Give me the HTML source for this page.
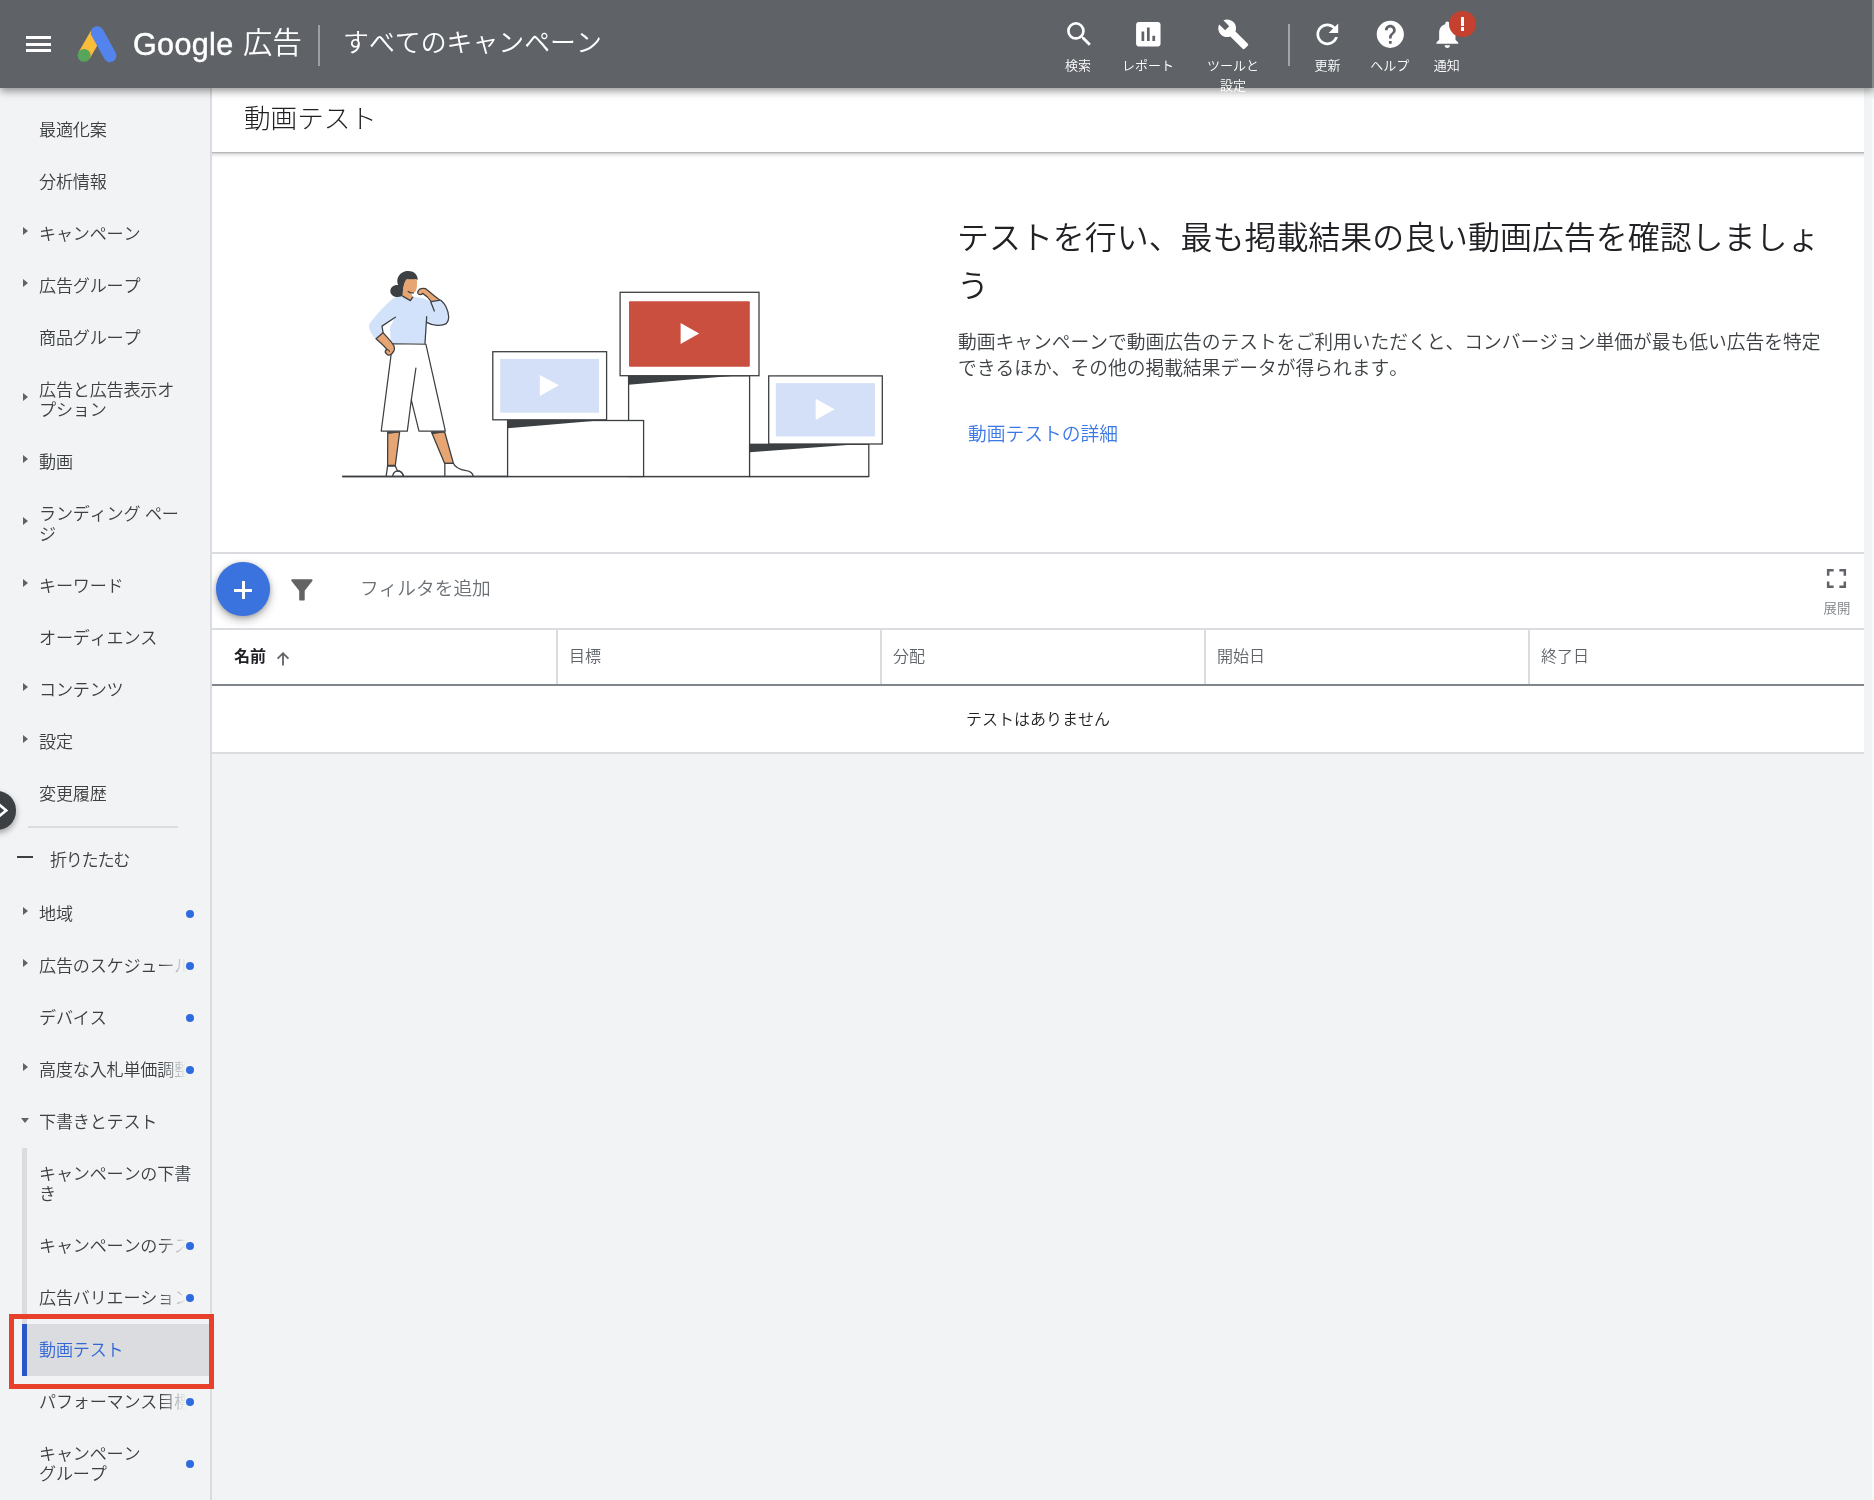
<!DOCTYPE html>
<html lang="ja">
<head>
<meta charset="utf-8">
<title>動画テスト - Google 広告</title>
<style>
*{box-sizing:border-box;margin:0;padding:0}
html,body{width:1874px;height:1500px;overflow:hidden;background:#f1f3f4}
body{font-kerning:none;font-family:"Liberation Sans","Noto Sans CJK JP",sans-serif;color:#3c4043;position:relative}
.abs{position:absolute}
#hdr,#side,#titlebar,#hero,#tool,#thead,#trow{will-change:transform}
/* header */
#hdr{position:absolute;left:0;top:0;width:1874px;height:88px;background:#5f6368;box-shadow:0 3px 8px rgba(0,0,0,.42);z-index:20;color:#fff}
#hdr .bar{position:absolute;left:26px;width:25px;height:3px;background:#fff}
#gtxt{position:absolute;left:133px;top:24px;font-size:30.5px;line-height:40px;letter-spacing:.35px;color:#fff;-webkit-text-stroke:.45px #fff}
#gads{position:absolute;left:243px;top:22.5px;font-size:29.4px;line-height:40px;font-weight:350;color:#fff}
#hdiv{position:absolute;left:318px;top:25px;width:2px;height:41px;background:#9aa0a6}
#acct{position:absolute;left:343px;top:23px;font-size:25.9px;line-height:40px;font-weight:350;color:#fff;white-space:nowrap}
.hlabel{position:absolute;top:56px;font-size:13px;font-weight:350;line-height:20px;color:#fff;text-align:center;white-space:nowrap;transform:translateX(-50%)}
/* sidebar */
#side{position:absolute;left:0;top:88px;width:212px;height:1412px;background:#f1f3f4;border-right:2px solid #d9dce0;z-index:5}
.ni{position:absolute;left:39px;letter-spacing:-.2px;font-size:17.1px;margin-top:1.5px;line-height:20px;color:#3c4043;white-space:nowrap;font-weight:350}
.tri{position:absolute;left:23px;width:0;height:0;border-left:5px solid #5f6368;border-top:4.5px solid transparent;border-bottom:4.5px solid transparent}
.trid{position:absolute;left:21px;width:0;height:0;border-top:5px solid #5f6368;border-left:4.5px solid transparent;border-right:4.5px solid transparent}
.dot{position:absolute;left:186px;width:8px;height:8px;border-radius:50%;background:#2f6be0}
.fade{position:absolute;left:160px;width:26px;height:30px;background:linear-gradient(to right,rgba(241,243,244,0),#f1f3f4)}
/* main */
#titlebar{position:absolute;left:212px;top:88px;width:1652px;height:64px;background:#fff;z-index:4}
#titlebar::after{content:"";position:absolute;left:0;right:0;top:100%;height:6px;background:linear-gradient(rgba(0,0,0,.34),rgba(0,0,0,.12) 30%,rgba(0,0,0,.03) 70%,rgba(0,0,0,0))}
#titlebar span{position:absolute;left:32px;top:11px;font-size:26.6px;line-height:40px;font-weight:300;color:#202124}
#hero{position:absolute;left:212px;top:152px;width:1652px;height:400px;background:#fff;z-index:3}
#h1{position:absolute;left:745px;top:62.300px;width:875px;font-size:31.950px;line-height:48px;font-weight:350;color:#202124;letter-spacing:0}
#desc{position:absolute;left:746px;top:177.5px;width:875px;font-size:18.75px;line-height:26.4px;font-weight:350;color:#3c4043}
#lnk{position:absolute;left:756px;top:269.5px;font-size:18.75px;line-height:26px;font-weight:350;color:#3b78e7}
#tool{position:absolute;left:212px;top:552px;width:1652px;height:78px;background:#fff;border-top:2px solid #dadce0;border-bottom:2px solid #dadce0;z-index:3}
#fab{position:absolute;left:4.2px;top:8.2px;width:53.6px;height:53.6px;border-radius:50%;background:#3a72de;box-shadow:0 4px 10px rgba(0,0,0,.28),0 1px 4px rgba(0,0,0,.2)}
#thead{position:absolute;left:212px;top:630px;width:1652px;height:56px;background:#fff;border-bottom:2px solid #80868b;z-index:3}
.th{position:absolute;top:0;height:54px;border-left:2px solid #dadce0;font-size:16px;line-height:20px;color:#5f6368;padding:17px 0 0 11px;font-weight:350}
#trow{position:absolute;left:212px;top:686px;width:1652px;height:68px;background:#fff;border-bottom:2px solid #dadce0;z-index:3;text-align:center;font-size:16px;line-height:20px;padding-top:24px;color:#202124;font-weight:350}
</style>
</head>
<body>
<div id="hdr">
  <div class="bar" style="top:36px"></div><div class="bar" style="top:42.5px"></div><div class="bar" style="top:49px"></div>
  <svg class="abs" style="left:70px;top:20px" width="54" height="48" viewBox="70 20 54 48">
    <line x1="84.1" y1="55.4" x2="96.6" y2="33.8" stroke="#f9bd3a" stroke-width="12.9"/>
    <line x1="97.25" y1="32.7" x2="110" y2="55.7" stroke="#5384ee" stroke-width="12.9" stroke-linecap="round"/>
    <circle cx="84.1" cy="55.4" r="6.45" fill="#57a55a"/>
  </svg>
  <svg class="abs" style="left:1062.5px;top:17.8px" width="32.64" height="32.64" viewBox="0 0 24 24"><path fill="#fff" d="M15.5 14h-.79l-.28-.27A6.471 6.471 0 0 0 16 9.5 6.5 6.5 0 1 0 9.5 16c1.61 0 3.09-.59 4.23-1.57l.27.28v.79l5 4.99L20.49 19l-4.99-5zm-6 0C7.01 14 5 11.99 5 9.5S7.01 5 9.5 5 14 7.01 14 9.5 11.99 14 9.5 14z"/></svg>
  <svg class="abs" style="left:1131.9px;top:17.6px" width="32.64" height="32.64" viewBox="0 0 24 24"><path fill="#fff" d="M19 3H5c-1.1 0-2 .9-2 2v14c0 1.1.9 2 2 2h14c1.1 0 2-.9 2-2V5c0-1.1-.9-2-2-2zM9 17H7v-7h2v7zm4 0h-2V7h2v10zm4 0h-2v-4h2v4z"/></svg>
  <svg class="abs" style="left:1217.1px;top:17.6px" width="32.64" height="32.64" viewBox="0 0 24 24"><path fill="#fff" d="M22.7 19l-9.1-9.1c.9-2.3.4-5-1.5-6.9-2-2-5-2.4-7.4-1.3L9 6 6 9 1.6 4.7C.4 7.1.9 10.1 2.9 12.1c1.9 1.9 4.6 2.4 6.9 1.5l9.1 9.1c.4.4 1 .4 1.4 0l2.3-2.3c.5-.4.5-1.1.1-1.4z"/></svg>
  <svg class="abs" style="left:1311.3px;top:17.8px" width="32.64" height="32.64" viewBox="0 0 24 24"><path fill="#fff" d="M17.65 6.35C16.2 4.9 14.21 4 12 4c-4.42 0-7.99 3.58-7.99 8s3.57 8 7.99 8c3.73 0 6.84-2.55 7.73-6h-2.08c-.82 2.33-3.04 4-5.65 4-3.31 0-6-2.69-6-6s2.69-6 6-6c1.66 0 3.14.69 4.22 1.78L13 11h7V4l-2.35 2.35z"/></svg>
  <svg class="abs" style="left:1373.7px;top:17.7px" width="32.64" height="32.64" viewBox="0 0 24 24"><path fill="#fff" d="M12 2C6.48 2 2 6.48 2 12s4.48 10 10 10 10-4.48 10-10S17.52 2 12 2zm1 17h-2v-2h2v2zm2.07-7.75l-.9.92C13.45 12.9 13 13.5 13 15h-2v-.5c0-1.1.45-2.1 1.17-2.83l1.24-1.26c.37-.36.59-.86.59-1.41 0-1.1-.9-2-2-2s-2 .9-2 2H8c0-2.21 1.79-4 4-4s4 1.79 4 4c0 .88-.36 1.68-.93 2.25z"/></svg>
  <svg class="abs" style="left:1430.5px;top:17.9px" width="32.64" height="32.64" viewBox="0 0 24 24"><path fill="#fff" d="M12 22c1.1 0 2-.9 2-2h-4c0 1.1.89 2 2 2zm6-6v-5c0-3.07-1.64-5.64-4.5-6.32V4c0-.83-.67-1.5-1.5-1.5s-1.5.67-1.5 1.5v.68C7.63 5.36 6 7.92 6 11v5l-2 2v1h16v-1l-2-2z"/></svg>
  <div class="abs" style="left:1449.3px;top:11px;width:26.3px;height:26.3px;border-radius:50%;background:#c5412f"></div>
  <div class="abs" style="left:1460.600px;top:17.400px;width:3.500px;height:8.700px;background:#fff"></div>
  <div class="abs" style="left:1460.600px;top:27.400px;width:3.500px;height:3.500px;background:#fff"></div>
  <div class="abs" style="left:1288px;top:24px;width:2px;height:42px;background:#a1a5aa"></div>
  <div id="gtxt">Google</div>
  <div id="gads">広告</div>
  <div id="hdiv"></div>
  <div id="acct">すべてのキャンペーン</div>
  <div class="hlabel" style="left:1078px">検索</div>
  <div class="hlabel" style="left:1148px">レポート</div>
  <div class="hlabel" style="left:1233px">ツールと<br>設定</div>
  <div class="hlabel" style="left:1327.500px">更新</div>
  <div class="hlabel" style="left:1389.800px">ヘルプ</div>
  <div class="hlabel" style="left:1446.800px">通知</div>
</div>
<div class="abs" style="left:1872px;top:0;width:2px;height:88px;background:#85898e;z-index:30"></div>
<div class="abs" style="left:1872px;top:98px;width:2px;height:1402px;background:#f8f9fa;z-index:2"></div>
<div id="side">
<div class="abs" style="left:28px;top:738px;width:150px;height:2px;background:#dadce0"></div>
<div class="abs" style="left:17.2px;top:767.6px;width:15.6px;height:2.2px;background:#3c4043"></div>
<div class="ni" style="left:50px;top:761px;letter-spacing:-1.3px">折りたたむ</div>
<div class="abs" style="left:22px;top:1060px;width:5px;height:176px;background:#dadce0"></div>
<div class="abs" style="left:22px;top:1236px;width:188px;height:52px;background:#dadce0;border-left:5px solid #2a56c6"></div>
<div class="abs" style="left:9px;top:1226px;width:205px;height:75px;border:5px solid #e8402a;z-index:9"></div>
<div class="abs" style="left:-22.4px;top:703.2px;width:38.4px;height:38.4px;border-radius:50%;background:#3c4043;box-shadow:0 3px 6px rgba(0,0,0,.35);z-index:8"></div>
<svg class="abs" style="left:0;top:710px;z-index:9" width="12" height="25" viewBox="0 0 12 25"><path d="M-3.500 4.400L6.200 12.400L-3.500 20.400" fill="none" stroke="#fff" stroke-width="2.6"/></svg>
<div class="ni" style="top:31px">最適化案</div>
<div class="ni" style="top:83px">分析情報</div>
<div class="ni" style="top:135px">キャンペーン</div>
<div class="tri" style="top:139px"></div>
<div class="ni" style="top:187px">広告グループ</div>
<div class="tri" style="top:191px"></div>
<div class="ni" style="top:239px">商品グループ</div>
<div class="ni" style="top:291px">広告と広告表示オ<br>プション</div>
<div class="tri" style="top:305px"></div>
<div class="ni" style="top:363px">動画</div>
<div class="tri" style="top:367px"></div>
<div class="ni" style="top:415px">ランディング ペー<br>ジ</div>
<div class="tri" style="top:429px"></div>
<div class="ni" style="top:487px">キーワード</div>
<div class="tri" style="top:491px"></div>
<div class="ni" style="top:539px">オーディエンス</div>
<div class="ni" style="top:591px">コンテンツ</div>
<div class="tri" style="top:595px"></div>
<div class="ni" style="top:643px">設定</div>
<div class="tri" style="top:647px"></div>
<div class="ni" style="top:695px">変更履歴</div>
<div class="ni" style="top:815px">地域</div>
<div class="tri" style="top:819px"></div>
<div class="dot" style="top:822px"></div>
<div class="ni" style="top:867px;width:147px;overflow:hidden">広告のスケジュール</div>
<div class="tri" style="top:871px"></div>
<div class="fade" style="top:862px"></div>
<div class="dot" style="top:874px"></div>
<div class="ni" style="top:919px">デバイス</div>
<div class="dot" style="top:926px"></div>
<div class="ni" style="top:971px;width:147px;overflow:hidden">高度な入札単価調整</div>
<div class="tri" style="top:975px"></div>
<div class="fade" style="top:966px"></div>
<div class="dot" style="top:978px"></div>
<div class="ni" style="top:1023px">下書きとテスト</div>
<div class="trid" style="top:1030px"></div>
<div class="ni" style="top:1075px">キャンペーンの下書<br>き</div>
<div class="ni" style="top:1147px;width:147px;overflow:hidden">キャンペーンのテスト</div>
<div class="fade" style="top:1142px"></div>
<div class="dot" style="top:1154px"></div>
<div class="ni" style="top:1199px;width:147px;overflow:hidden">広告バリエーション</div>
<div class="fade" style="top:1194px"></div>
<div class="dot" style="top:1206px"></div>
<div class="ni" style="top:1251px;color:#3367d6">動画テスト</div>
<div class="ni" style="top:1303px;width:147px;overflow:hidden">パフォーマンス目標</div>
<div class="fade" style="top:1298px"></div>
<div class="dot" style="top:1310px"></div>
<div class="ni" style="top:1355px">キャンペーン<br>グループ</div>
<div class="dot" style="top:1372px"></div>
</div>
<div id="titlebar"><span>動画テスト</span></div>
<div id="hero">
  <svg class="abs" style="left:0;top:0" width="1652" height="400" viewBox="212 152 1652 400">
<g stroke="#3c4043" stroke-width="1.3" fill="#fff" stroke-linejoin="miter">
  <line x1="342.3" y1="476.5" x2="868.8" y2="476.5"/>
  <rect x="628.6" y="375.7" width="121" height="100.8"/>
  <rect x="507.6" y="420.5" width="136" height="56"/>
  <rect x="749.6" y="444.3" width="119.2" height="32.2"/>
</g>
<g fill="#3c4043">
  <polygon points="507.6,420.3 605,420 507.6,428.2"/>
  <polygon points="628.6,375.5 738,375.5 628.6,384.8"/>
  <polygon points="749.6,444.1 861,444.1 749.6,452.2"/>
</g>
<g stroke="#3c4043" stroke-width="1.3" fill="#fff">
  <rect x="492.8" y="351.7" width="113.8" height="68.1"/>
  <rect x="620.1" y="292.3" width="138.9" height="83.4"/>
  <rect x="768.7" y="375.9" width="113.6" height="68.1"/>
</g>
<rect x="500.2" y="358.9" width="98.8" height="53.8" fill="#d3e0f8"/>
<rect x="629" y="301.3" width="120.8" height="65.4" rx="1" fill="#ca4f3f"/>
<rect x="775.8" y="383.1" width="99.1" height="53.3" fill="#d3e0f8"/>
<g fill="#fff">
  <polygon points="539.8,375 539.8,395.9 558.9,385.3"/>
  <polygon points="680.6,323 680.6,343.9 699.2,333.4"/>
  <polygon points="815.7,398.8 815.7,420.1 834.5,409.3"/>
</g>

<g transform="translate(370 400) scale(0.058699)" stroke-linejoin="round" stroke-linecap="round" stroke="#3c4043" stroke-width="22">
  <path d="M302 545 L505 545 L430 1120 L300 1120 Z" fill="#e7a573"/>
  <path d="M1047 545 L1272 545 L1420 1076 L1270 1078 Z" fill="#e7a573"/>
  <path d="M305 548 L498 548 L312 580 Z" fill="#3c4043" stroke="none"/>
  <path d="M1050 548 L1268 548 L1062 582 Z" fill="#3c4043" stroke="none"/>
  <path d="M300 1122 L430 1122 L466 1205 C520 1200 560 1250 572 1302 L275 1302 Z" fill="#fff"/>
  <path d="M385 1302 C400 1180 540 1180 572 1302" fill="none"/>
  <path d="M304 1118 L428 1118" stroke-width="30" stroke-linecap="butt"/>
  <path d="M1275 1080 L1420 1078 C1450 1150 1520 1185 1640 1205 C1720 1215 1750 1250 1760 1302 L1275 1302 Z" fill="#fff"/>
</g>
<g transform="translate(330 260) scale(0.15340)" stroke-linejoin="round" stroke-linecap="round">
  <path d="M405 545 L625 548 L752 1115 L580 1116 L530 912 L504 1116 L334 1115 L398 620 Z" fill="#fff" stroke="#3c4043" stroke-width="8"/>
  <path d="M560 705 L530 912" fill="none" stroke="#3c4043" stroke-width="8"/>
</g>
<g transform="translate(360 260) scale(0.066667)" stroke-linejoin="round" stroke-linecap="round">
  <path d="M640 545 C560 585 450 545 455 462 C460 400 520 368 572 376 C540 300 570 200 680 170 C780 148 862 200 866 292 L842 302 L700 292 C670 330 650 380 640 545 Z" fill="#3c4043"/>
  <path d="M692 292 L850 284 C861 340 856 400 846 440 C840 470 820 495 790 498 L770 500 L792 558 L755 610 L640 542 C640 450 650 360 692 292 Z" fill="#e7a573"/>
  <path d="M722 472 C745 490 775 498 802 494" fill="none" stroke="#3c4043" stroke-width="18"/>
  <path d="M640 542 L520 562 C400 640 230 840 140 960 C120 1020 170 1120 235 1182 L345 1090 L328 994 L530 858 L450 1000 L460 1250 L975 1250 L1000 935 C1100 992 1230 992 1295 955 C1342 900 1336 800 1290 700 C1270 660 1240 630 1212 605 L1060 625 C1000 590 950 570 900 565 L792 556 L755 610 Z" fill="#d2e2fb"/>
  <g fill="none" stroke="#3c4043" stroke-width="19">
    <path d="M640 542 L755 610 L792 556"/>
    <path d="M530 858 L330 992 L346 1088"/>
    <path d="M1000 850 L975 1250"/>
    <path d="M1000 935 C1100 992 1230 992 1295 955 C1342 900 1336 800 1290 700 C1270 660 1240 630 1212 605"/>
    <path d="M1062 630 L1115 765"/>
  </g>
  <path d="M240 1180 L345 1090 C400 1150 470 1220 510 1290 C530 1340 500 1400 450 1425 C425 1432 400 1420 398 1402 C368 1392 372 1352 405 1345 C380 1300 310 1240 240 1180 Z" fill="#e7a573" stroke="#3c4043" stroke-width="19"/>
  <path d="M400 1348 C425 1342 440 1355 442 1372" fill="none" stroke="#3c4043" stroke-width="16"/>
  <path d="M1068 624 C1040 580 990 530 940 500 C920 528 880 528 868 500 C860 480 868 465 880 455 C885 430 940 420 985 430 C1060 490 1130 560 1205 603 Z" fill="#e7a573" stroke="#3c4043" stroke-width="19"/>
</g>
<line x1="342.3" y1="476.5" x2="508" y2="476.5" stroke="#3c4043" stroke-width="1.3"/>
</svg>
  <div id="h1">テストを行い、最も掲載結果の良い動画広告を確認しましょう</div>
  <div id="desc">動画キャンペーンで動画広告のテストをご利用いただくと、コンバージョン単価が最も低い広告を特定できるほか、その他の掲載結果データが得られます。</div>
  <div id="lnk">動画テストの詳細</div>
</div>
<div id="tool">
  <div id="fab"></div>
  <div class="abs" style="left:21.800px;top:34.500px;width:18.600px;height:3px;background:#fff"></div>
  <div class="abs" style="left:29.600px;top:26.700px;width:3px;height:18.600px;background:#fff"></div>
  <svg class="abs" style="left:77px;top:24px" width="26" height="26" viewBox="0 0 26 26"><path fill="#626364" d="M2.300 2.0Q2.300 1.200 3.100 1.200H22.700Q23.500 1.200 23.500 2.0V2.800L15.700 12.800V21.400Q15.700 22.600 14.500 22.600H11.400Q10.200 22.600 10.200 21.400V12.800L2.300 2.800Z"/></svg>
  <div class="abs" style="left:148px;top:22px;font-size:18.7px;line-height:26px;color:#6b7075;font-weight:350;white-space:nowrap">フィルタを追加</div>
  <svg class="abs" style="left:1613.2px;top:12.9px" width="23" height="23" viewBox="0 0 24 24"><path fill="#5f6368" d="M2 2h7v2.6H4.6V9H2zM15 2h7v7h-2.6V4.6H15zM2 15h2.6v4.4H9V22H2zM19.400 15H22v7h-7v-2.600h4.400z"/></svg>
  <div class="abs" style="left:1611.5px;top:46px;font-size:13.4px;line-height:18px;color:#80868b;font-weight:350;white-space:nowrap">展開</div>
</div>
<div id="thead">
  <div class="th" style="left:-2px;width:346px;border-left:0;color:#202124;font-weight:700;padding-left:24px">名前</div>
  <svg class="abs" style="left:62px;top:19.5px" width="18" height="18" viewBox="0 0 18 18"><path d="M9 15.5V3.5M3.6 8.6L9 3.2l5.400 5.400" fill="none" stroke="#5f6368" stroke-width="1.8"/></svg>
  <div class="th" style="left:344px;width:324px">目標</div>
  <div class="th" style="left:668px;width:324px">分配</div>
  <div class="th" style="left:992px;width:324px">開始日</div>
  <div class="th" style="left:1316px;width:324px">終了日</div>
</div>
<div id="trow">テストはありません</div>
</body>
</html>
